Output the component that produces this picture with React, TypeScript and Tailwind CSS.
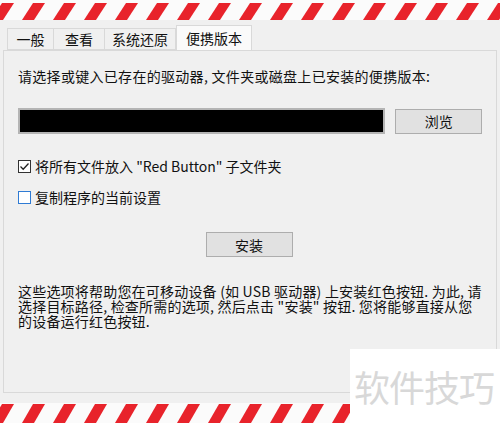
import React from "react";

const FONT = { fontFamily: '"Noto Sans CJK SC", "Noto Sans", sans-serif' };

function Stripes({ id, top = 3 }: { id: string; top?: number }) {
  // red hazard stripes, slanted like "/"
  return (
    <svg width="500" height="20" className="block">
      <defs>
        <pattern id={id} x="-9" y="0" width="31" height="20" patternUnits="userSpaceOnUse">
          <polygon points={`0,20 12,20 23,${top} 11,${top}`} fill="#e8232b" />
        </pattern>
      </defs>
      <rect x="0" y="0" width="500" height="20" fill="#fbfbfb" />
      <rect x="0" y="0" width="500" height="20" fill={`url(#${id})`} />
    </svg>
  );
}

function Tab({ label, active = false, w }: { label: string; active?: boolean; w: string }) {
  if (active) {
    return (
      <div
        className={`${w} h-[26px] -mb-px bg-[#fafafa] border border-b-0 border-[#d9d9d9] text-[14px] text-[#111] flex items-center justify-center leading-none pb-[1px]`}
      >
        {label}
      </div>
    );
  }
  return (
    <div
      className={`${w} h-[22px] bg-[#f0f0f0] border border-[#d9d9d9] -ml-px first:ml-0 text-[14px] text-[#111] flex items-center justify-center leading-none`}
    >
      {label}
    </div>
  );
}

function CheckRow({ checked, label }: { checked: boolean; label: React.ReactNode }) {
  return (
    <div className="flex items-center h-[20px] gap-[4px]">
      {checked ? (
        <span className="w-[13px] h-[13px] border border-[#333] bg-white flex items-center justify-center">
          <svg width="11" height="11" viewBox="0 0 11 11">
            <path d="M1.5 5.5 L4.2 8.2 L9.5 2.5" fill="none" stroke="#222" strokeWidth="1.3" />
          </svg>
        </span>
      ) : (
        <span className="w-[13px] h-[13px] border border-[#2f7bd4] bg-white" />
      )}
      <span className="text-[14px] text-[#111] leading-none">{label}</span>
    </div>
  );
}

export default function App() {
  return (
    <div className="relative w-[500px] h-[423px] overflow-hidden bg-[#f0f0f0] flex flex-col" style={FONT}>
      <Stripes id="topStripes" />

      {/* tab strip */}
      <div className="mt-[5px] pl-[7px] flex items-end">
        <Tab label="一般" w="w-[47px]" />
        <Tab label="查看" w="w-[52px]" />
        <Tab label="系统还原" w="w-[72px]" />
        <Tab label="便携版本" w="w-[76px]" active />
      </div>

      {/* tab page */}
      <div className="mx-[3px] h-[343px] border border-[#d9d9d9] bg-[#f0f0f0] px-[14px] pt-[15px]">
        <p className="text-[14px] leading-[20px] text-[#111] whitespace-nowrap tracking-[0.3px]">
          请选择或键入已存在的驱动器, 文件夹或磁盘上已安装的便携版本:
        </p>

        <div className="mt-[22px] flex items-center">
          <div className="w-[369px] h-[26px] bg-black border-2 border-[#b4b4b4]" />
          <button className="ml-[10px] w-[87px] h-[25px] bg-[#e1e1e1] border border-[#adadad] text-[14px] text-[#111] leading-none">
            浏览
          </button>
        </div>

        <div className="mt-[22px]">
          <CheckRow checked label={<>将所有文件放入 "Red Button" 子文件夹</>} />
        </div>
        <div className="mt-[11px]">
          <CheckRow checked={false} label="复制程序的当前设置" />
        </div>

        <div className="mt-[25px] flex justify-center pr-[2px]">
          <button className="w-[87px] h-[25px] bg-[#e1e1e1] border border-[#adadad] text-[14px] text-[#111] leading-none">
            安装
          </button>
        </div>

        <div className="mt-[27px] text-[14px] leading-[15px] text-[#111] whitespace-nowrap tracking-[0.2px]">
          <span className="block">这些选项将帮助您在可移动设备 (如 USB 驱动器) 上安装红色按钮. 为此, 请</span>
          <span className="block">选择目标路径, 检查所需的选项, 然后点击 "安装" 按钮. 您将能够直接从您</span>
          <span className="block">的设备运行红色按钮.</span>
        </div>
      </div>

      <div className="mt-[10px]">
        <Stripes id="bottomStripes" top={1} />
      </div>

      {/* watermark */}
      <div className="absolute left-[350px] top-[349px] w-[150px] h-[74px] bg-white flex items-center pl-[4px]">
        <span className="text-[36px] leading-none text-[#d8d8d8] tracking-[-1px]">软件技巧</span>
      </div>
    </div>
  );
}
